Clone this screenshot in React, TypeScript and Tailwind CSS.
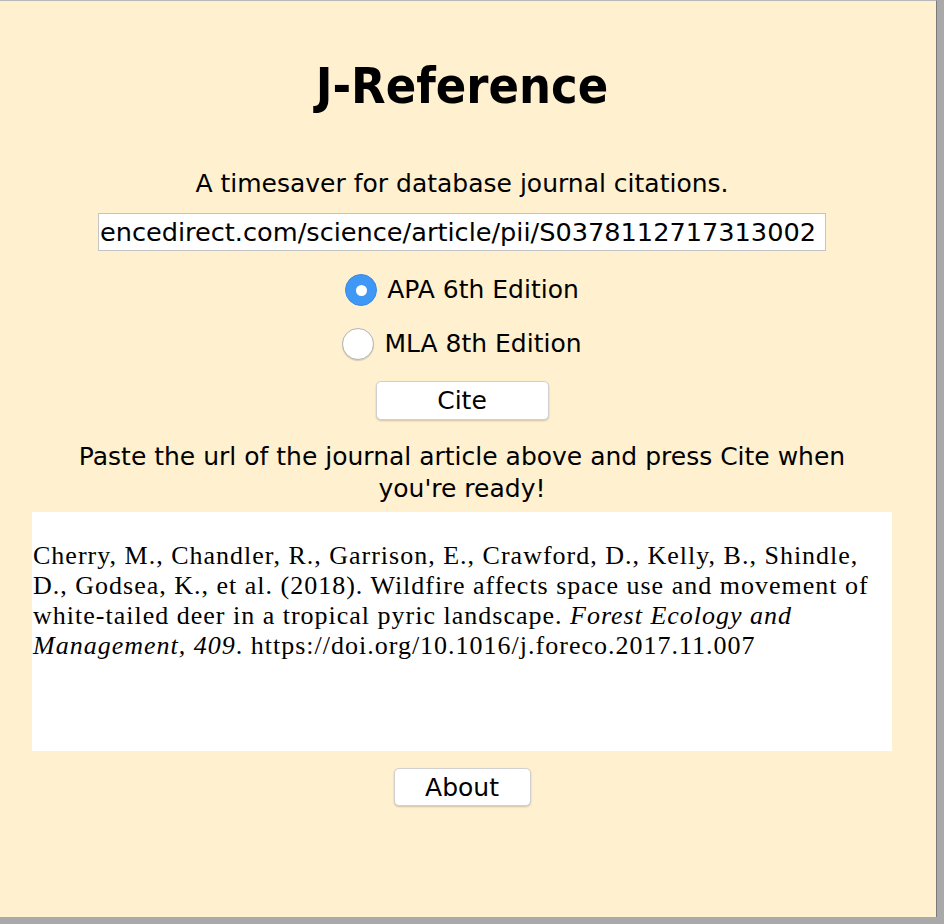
const ui = "font-['DejaVu_Sans',sans-serif]";

const citation: { text: string; italic?: boolean }[][] = [
  [{ text: "Cherry, M., Chandler, R., Garrison, E., Crawford, D., Kelly, B., Shindle," }],
  [{ text: "D., Godsea, K., et al. (2018). Wildfire affects space use and movement of" }],
  [
    { text: "white-tailed deer in a tropical pyric landscape. " },
    { text: "Forest Ecology and", italic: true },
  ],
  [
    { text: "Management, 409", italic: true },
    { text: ". https://doi.org/10.1016/j.foreco.2017.11.007" },
  ],
];

const Radio = ({ checked, label }: { checked: boolean; label: string }) => (
  <label className="flex items-center gap-[10px] cursor-pointer">
    {checked ? (
      <span className="w-[32px] h-[32px] rounded-full bg-[#3f97f6] border border-[#3a8ae6] flex items-center justify-center">
        <span className="w-[11px] h-[11px] rounded-full bg-white" />
      </span>
    ) : (
      <span className="w-[32px] h-[32px] rounded-full bg-white border border-[#b5b5b5] shadow-[0_1px_1px_rgba(0,0,0,0.15)]" />
    )}
    <span className="text-[25px] leading-[30px] text-black">{label}</span>
  </label>
);

const App = () => {
  return (
    <div className="w-[944px] h-[924px] bg-[#a9a9a9] overflow-hidden">
      <main
        className={`w-[937px] h-[917px] bg-[#fff0d0] border-t border-[#b8b8b8] border-r border-r-[#7a7a7a] ${ui}`}
      >
        <div className="w-[924px] flex flex-col items-center">
          <h1 className="mt-[55px] font-['DejaVu_Sans_Condensed','DejaVu_Sans',sans-serif] text-[50px] leading-[60px] font-bold text-black">
            J-Reference
          </h1>

          <p className="mt-[53px] text-[25px] leading-[30px] text-black">A timesaver for database journal citations.</p>

          <div className="mt-[14px] w-[728px] h-[38px] bg-white border border-[#c4c4c4] flex items-center justify-end overflow-hidden pr-[9px]">
            <span className="whitespace-nowrap text-[25.6px] text-black">
              https://www.sciencedirect.com/science/article/pii/S0378112717313002
            </span>
          </div>

          <div className="mt-[23px] flex flex-col items-center gap-[22px]">
            <Radio checked label="APA 6th Edition" />
            <Radio checked={false} label="MLA 8th Edition" />
          </div>

          <button className="mt-[21px] w-[173px] h-[39px] bg-white rounded-[5px] border border-[#d0d0d0] shadow-[0_1px_2px_rgba(0,0,0,0.2)] text-[25px] text-black">
            Cite
          </button>

          <p className="mt-[21px] w-[790px] text-center text-[25px] leading-[32px] text-black">
            Paste the url of the journal article above and press Cite when you're ready!
          </p>

          <div className="mt-[7px] w-[860px] h-[239px] bg-white pt-[29px] pl-[1px] font-['Liberation_Serif',serif] text-[26px] leading-[30px] tracking-[1px] text-black">
            {citation.map((line, i) => (
              <div key={i} className="whitespace-nowrap">
                {line.map((seg, j) => (
                  <span key={j} className={seg.italic ? "italic" : ""}>
                    {seg.text}
                  </span>
                ))}
              </div>
            ))}
          </div>

          <button className="mt-[17px] w-[137px] h-[38px] bg-white rounded-[5px] border border-[#d0d0d0] shadow-[0_1px_2px_rgba(0,0,0,0.2)] text-[25px] text-black">
            About
          </button>
        </div>
      </main>
    </div>
  );
};

export default App;
